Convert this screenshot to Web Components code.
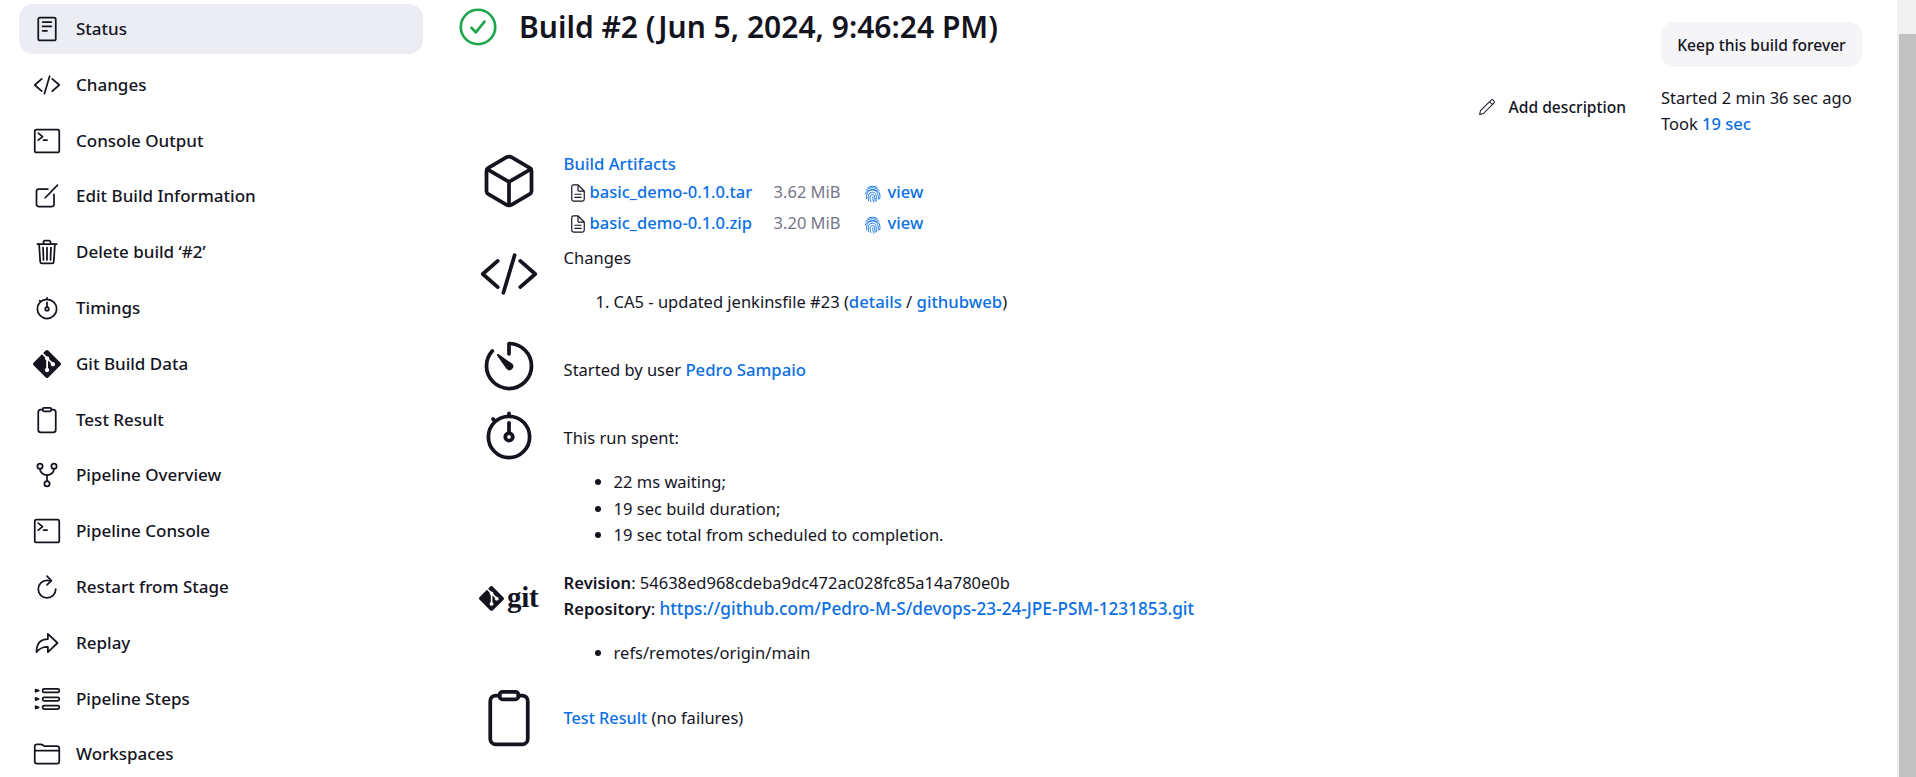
<!DOCTYPE html>
<html lang="en">
<head>
<meta charset="utf-8">
<title>Build #2</title>
<style>
  html, body { margin: 0; height: 100%; overflow: hidden; background: #fff; }
  body { font-family: "Noto Sans", "Open Sans", sans-serif; font-size: 16.5px; color: #14141f; }
</style>
</head>
<body>
<build-page></build-page>

<script>
const ICONS = {
    status: `<rect x="96" y="48" width="320" height="416" rx="32" class="s"/><path class="s" d="M176 128h160M176 208h160M176 288h80"/>`,
    code: `<path class="s" d="M160 368L32 256l128-112M352 368l128-112-128-112M304 96l-96 320"/>`,
    terminal: `<rect x="32" y="48" width="448" height="416" rx="32" class="s"/><path class="s" d="M96 112l80 64-80 64M192 240h64"/>`,
    edit: `<path class="s" d="M384 224v184a40 40 0 01-40 40H104a40 40 0 01-40-40V168a40 40 0 0140-40h167.48"/><path class="s" d="M224 288L448 56"/>`,
    trash: `<path class="s" d="M112 112l20 320c.95 18.49 14.4 32 32 32h184c17.67 0 30.87-13.51 32-32l20-320"/><path class="s" d="M80 112h352"/><path class="s" d="M192 112V72a23.93 23.93 0 0124-24h80a23.93 23.93 0 0124 24v40M256 176v224M184 176l8 224M328 176l-8 224"/>`,
    stopwatch: `<path class="s" d="M256 232v-80"/><path class="s" d="M256 88V72M132 132l-12-12"/><circle cx="256" cy="272" r="32" class="s"/><path class="s" d="M256 96c-97.05 0-176 78.95-176 176s78.95 176 176 176 176-78.95 176-176S353.05 96 256 96z"/>`,
    timer: `<path class="s" d="M112.91 128A191.85 191.85 0 0064 254c-1.18 106.35 85.65 193.8 192 194 106.2.2 192-85.83 192-192 0-104.54-83.55-189.61-187.5-192a4.36 4.36 0 00-4.5 4.37V152"/><path class="f" d="M233.38 278.63l-79-113a8.13 8.13 0 0111.32-11.32l113 79a32.5 32.5 0 01-37.25 53.26 33.21 33.21 0 01-8.07-8.32z"/>`,
    clipboard: `<path class="s" d="M336 64h32a48 48 0 0148 48v320a48 48 0 01-48 48H144a48 48 0 01-48-48V112a48 48 0 0148-48h32"/><rect x="176" y="32" width="160" height="64" rx="26" class="s"/>`,
    network: `<circle cx="128" cy="96" r="48" class="s"/><circle cx="256" cy="416" r="48" class="s"/><path class="s" d="M256 256v112"/><circle cx="384" cy="96" r="48" class="s"/><path class="s" d="M128 144c0 74.67 68.92 112 128 112M384 144c0 74.67-68.92 112-128 112"/>`,
    reload: `<path class="s" d="M320 146s24.36-12-64-12a160 160 0 10160 160"/><path class="s" d="M256 58l80 80-80 80"/>`,
    redo: `<path class="s" d="M448 256L272 88v96C103.57 184 64 304.77 64 424c48.61-62.24 91.6-96 208-96v96z"/>`,
    steps: `<rect x="176" y="72" width="304" height="64" rx="28" class="s"/><rect x="176" y="224" width="304" height="64" rx="28" class="s"/><rect x="176" y="376" width="304" height="64" rx="28" class="s"/><path class="s" d="M48 84l56 20-56 20zM48 236l56 20-56 20zM48 388l56 20-56 20z"/>`,
    folder: `<path class="s" d="M440 432H72a40 40 0 01-40-40V120a40 40 0 0140-40h75.89a40 40 0 0122.19 6.72l27.84 18.56a40 40 0 0022.19 6.72H440a40 40 0 0140 40v240a40 40 0 01-40 40zM32 192h448"/>`,
    cube: `<path class="s" d="M448 341.37V170.61A32 32 0 00432.11 143l-152-88.46a47.94 47.94 0 00-48.24 0L79.89 143A32 32 0 0064 170.61v170.76A32 32 0 0079.89 369l152 88.46a48 48 0 0048.24 0l152-88.46A32 32 0 00448 341.37z"/><path class="s" d="M69 153.99l187 110 187-110M256 463.99v-200"/>`,
    file: `<path class="s" d="M416 221.25V416a48 48 0 01-48 48H144a48 48 0 01-48-48V96a48 48 0 0148-48h98.75a32 32 0 0122.62 9.37l141.26 141.26a32 32 0 019.37 22.62z"/><path class="s" d="M256 56v120a32 32 0 0032 32h120M176 288h160M176 368h160"/>`,
    pencil: `<path class="s" d="M362 78a34 34 0 0148 0l26 26a34 34 0 010 48L166 422l-98 24 22-98zM322 118l74 74"/>`,
    check: `<circle cx="256" cy="256" r="232" class="s"/><path class="s" d="M344 184L226 328l-58-62"/>`,
    fingerprint: `<path class="s" d="M132 92c76-44 172-44 248 0M76 176c84-104 276-104 360 0M60 270c36-160 356-160 392 0 8 40 6 90 0 130M100 400c-24-170 60-240 156-240 100 0 170 70 156 250M154 448c-26-90-22-226 102-226 96 0 112 90 100 236M212 472c-26-60-44-190 44-190 70 0 54 110 72 180M262 344c0 60 10 110 30 146"/>`
};

class AppIcon extends HTMLElement {
    connectedCallback() {
        const size = this.getAttribute("size") || 28;
        const weight = this.getAttribute("weight") || 32;
        this.attachShadow({ mode: "open" }).innerHTML = `
      <style>
        :host { display: inline-flex; flex: none; width: ${size}px; height: ${size}px; color: inherit; }
        svg { width: 100%; height: 100%; display: block; }
        .s { fill: none; stroke: currentColor; stroke-width: ${weight}; stroke-linecap: round; stroke-linejoin: round; }
        .f { fill: currentColor; }
      </style>
      <svg viewBox="0 0 512 512">${ICONS[this.getAttribute("name")]}</svg>`;
    }
}
customElements.define("app-icon", AppIcon);

class GitMark extends HTMLElement {
    connectedCallback() {
        const size = this.getAttribute("size") || 28;
        this.attachShadow({ mode: "open" }).innerHTML = `
      <style>
        :host { display: inline-flex; flex: none; width: ${size}px; height: ${size}px; }
        svg { width: 100%; height: 100%; display: block; fill: #14141f; }
      </style>
      <svg viewBox="0 0 24 24"><path d="M23.546 10.93L13.067.452c-.604-.603-1.582-.603-2.188 0L8.708 2.627l2.76 2.76c.645-.215 1.379-.07 1.889.441.516.515.658 1.258.438 1.9l2.658 2.66c.645-.223 1.387-.078 1.9.435.721.72.721 1.884 0 2.604-.719.719-1.881.719-2.6 0-.539-.541-.674-1.337-.404-1.996L12.86 8.955v6.525c.176.086.342.203.488.348.713.721.713 1.883 0 2.6-.719.721-1.889.721-2.609 0-.719-.719-.719-1.879 0-2.598.182-.18.387-.316.605-.406V8.835c-.217-.091-.424-.222-.6-.401-.545-.545-.676-1.342-.396-2.009L7.636 3.7.45 10.881c-.6.605-.6 1.584 0 2.189l10.48 10.477c.604.604 1.582.604 2.186 0l10.43-10.43c.605-.603.605-1.582 0-2.187"/></svg>`;
    }
}
customElements.define("git-mark", GitMark);

class SideItem extends HTMLElement {
    connectedCallback() {
        const active = this.hasAttribute("active");
        this.attachShadow({ mode: "open" }).innerHTML = `
      <style>
        :host {
          display: flex;
          align-items: center;
          gap: 15px;
          height: 50px;
          padding-left: 14px;
          border-radius: 14px;
          font-size: 17px;
          font-weight: 500;
          background: ${active ? "#ecedf3" : "transparent"};
        }
        span { margin-top: -1px; }
      </style>
      <slot name="icon"></slot>
      <span><slot></slot></span>`;
    }
}
customElements.define("side-item", SideItem);

class SidePanel extends HTMLElement {
    connectedCallback() {
        const items = [
            ["status", "Status"], ["code", "Changes"], ["terminal", "Console Output"],
            ["edit", "Edit Build Information"], ["trash", "Delete build ‘#2’"], ["stopwatch", "Timings"],
            ["git", "Git Build Data"], ["clipboard", "Test Result"], ["network", "Pipeline Overview"],
            ["terminal", "Pipeline Console"], ["reload", "Restart from Stage"], ["redo", "Replay"],
            ["steps", "Pipeline Steps"], ["folder", "Workspaces"]
        ];
        const rows = items.map(([icon, label], i) => {
            const glyph = icon === "git"
                ? `<git-mark slot="icon" size="28"></git-mark>`
                : `<app-icon slot="icon" name="${icon}" size="28"></app-icon>`;
            return `<side-item ${i === 0 ? "active" : ""}>${glyph}${label}</side-item>`;
        }).join("");
        this.attachShadow({ mode: "open" }).innerHTML = `
      <style>
        :host {
          display: flex;
          flex-direction: column;
          gap: 5.8px;
          padding: 4px 19px 0 19px;
          box-sizing: border-box;
          width: 442px;
        }
      </style>
      ${rows}`;
    }
}
customElements.define("side-panel", SidePanel);

class SummaryRow extends HTMLElement {
    connectedCallback() {
        const height = this.getAttribute("height");
        const pad = this.getAttribute("pad") || 0;
        this.attachShadow({ mode: "open" }).innerHTML = `
      <style>
        :host {
          display: grid;
          grid-template-columns: 60px 1fr;
          column-gap: 24.6px;
          height: ${height}px;
          line-height: 26px;
        }
        .icon { height: 60px; display: flex; align-items: center; }
        .body { padding-top: ${pad}px; min-width: 0; }
      </style>
      <div class="icon"><slot name="icon"></slot></div>
      <div class="body"><slot></slot></div>`;
    }
}
customElements.define("summary-row", SummaryRow);

class ArtifactLine extends HTMLElement {
    connectedCallback() {
        const name = this.getAttribute("name");
        const size = this.getAttribute("size");
        this.attachShadow({ mode: "open" }).innerHTML = `
      <style>
        :host {
          display: grid;
          grid-template-columns: 20px 184px 91px auto;
          height: 31px;
          align-items: center;
          padding-left: 6px;
          margin-top: -1px;
          margin-bottom: 1px;
          line-height: 31px;
        }
        a { color: var(--link); font-size: 16.5px; font-weight: 500; text-decoration: none; }
        .size { color: #777788; }
        .name { display: flex; align-items: center; }
        .view { display: flex; align-items: center; gap: 6px; margin-left: -2px; }
        .view app-icon { color: var(--link); margin-top: 3px; }
        app-icon.doc { margin: 3px 0 0 -2px; }
      </style>
      <app-icon class="doc" name="file" size="20" weight="30"></app-icon>
      <span class="name"><a href="#">${name}</a></span>
      <span class="size">${size}</span>
      <span class="view"><app-icon name="fingerprint" size="19" weight="24"></app-icon><a href="#">view</a></span>`;
    }
}
customElements.define("artifact-line", ArtifactLine);

class BuildHeader extends HTMLElement {
    connectedCallback() {
        this.attachShadow({ mode: "open" }).innerHTML = `
      <style>
        :host {
          display: grid;
          grid-template-columns: 1fr 201px;
          height: 151px;
          padding: 0 35px 0 17px;
        }
        .title { display: flex; align-items: center; gap: 22px; height: 54px; }
        h1 { margin: 0; font-size: 30px; line-height: 36px; font-weight: 600; }
        .check { color: #1ea64c; }
        .side { padding-top: 22px; }
        button {
          display: block;
          width: 201px;
          height: 45px;
          border: 0;
          border-radius: 13px;
          background: #f5f5f8;
          color: #14141f;
          font: 500 15.6px "Noto Sans", "Open Sans", sans-serif;
          padding: 0;
        }
        .meta { margin-top: 18px; line-height: 26px; white-space: nowrap; }
        .meta a { color: var(--link); font-weight: 500; text-decoration: none; }
        .left { display: flex; flex-direction: column; }
        .desc {
          display: flex;
          align-items: center;
          justify-content: flex-end;
          gap: 12px;
          margin-top: 40px;
          padding-right: 35px;
          height: 26px;
          font-size: 15.6px;
          font-weight: 500;
        }
      </style>
      <div class="left">
        <div class="title">
          <app-icon class="check" name="check" size="38" weight="36"></app-icon>
          <h1>Build #2 (Jun 5, 2024, 9:46:24 PM)</h1>
        </div>
        <div class="desc"><app-icon name="pencil" size="20" weight="26"></app-icon><span>Add description</span></div>
      </div>
      <div class="side">
        <button>Keep this build forever</button>
        <div class="meta">Started 2 min 36 sec ago<br>Took <a href="#">19 sec</a></div>
      </div>`;
    }
}
customElements.define("build-header", BuildHeader);

class BuildSummary extends HTMLElement {
    connectedCallback() {
        this.attachShadow({ mode: "open" }).innerHTML = `
      <style>
        :host { display: block; padding-left: 37px; }
        a { color: var(--link); font-size: 16.7px; font-weight: 500; text-decoration: none; }
        a.url { font-size: 17.2px; }
        a.test { font-size: 16.2px; }
        ul, ol { margin: 18px 0 0; padding-left: 50px; line-height: 26.5px; }
        b { font-size: 16.6px; font-weight: 600; }
        .git { display: flex; align-items: center; gap: 3px; margin-top: -1px; }
        .git span { font: 700 29px/30px "Liberation Serif", serif; margin-top: -4px; letter-spacing: -.3px; }
      </style>
      <summary-row height="93">
        <app-icon slot="icon" name="cube" size="60"></app-icon>
        <a href="#">Build Artifacts</a>
        <artifact-line name="basic_demo-0.1.0.tar" size="3.62 MiB"></artifact-line>
        <artifact-line name="basic_demo-0.1.0.zip" size="3.20 MiB"></artifact-line>
      </summary-row>
      <summary-row height="92" pad="1">
        <app-icon slot="icon" name="code" size="60"></app-icon>
        Changes
        <ol><li>CA5 - updated jenkinsfile #23 (<a href="#">details</a> / <a href="#">githubweb</a>)</li></ol>
      </summary-row>
      <summary-row height="69" pad="21">
        <app-icon slot="icon" name="timer" size="60"></app-icon>
        Started by user <a href="#">Pedro Sampaio</a>
      </summary-row>
      <summary-row height="164" pad="20">
        <app-icon slot="icon" name="stopwatch" size="60"></app-icon>
        This run spent:
        <ul><li>22 ms waiting;</li><li>19 sec build duration;</li><li>19 sec total from scheduled to completion.</li></ul>
      </summary-row>
      <summary-row height="119" pad="1">
        <div slot="icon" class="git"><git-mark size="25"></git-mark><span>git</span></div>
        <b>Revision</b>: 54638ed968cdeba9dc472ac028fc85a14a780e0b<br>
        <b>Repository</b>: <a class="url" href="#">https://github.com/Pedro-M-S/devops-23-24-JPE-PSM-1231853.git</a>
        <ul><li>refs/remotes/origin/main</li></ul>
      </summary-row>
      <summary-row height="60" pad="17">
        <app-icon slot="icon" name="clipboard" size="60"></app-icon>
        <a class="test" href="#">Test Result</a> (no failures)
      </summary-row>`;
    }
}
customElements.define("build-summary", BuildSummary);

class FakeScrollbar extends HTMLElement {
    connectedCallback() {
        this.attachShadow({ mode: "open" }).innerHTML = `
      <style>
        :host {
          display: block;
          box-sizing: border-box;
          width: 19px;
          height: 100%;
          padding: 34px 0 0 2px;
          background: #f1f1f1;
        }
        div { height: 100%; background: #c1c1c1; }
      </style>
      <div></div>`;
    }
}
customElements.define("fake-scrollbar", FakeScrollbar);

class BuildPage extends HTMLElement {
    connectedCallback() {
        this.attachShadow({ mode: "open" }).innerHTML = `
      <style>
        :host {
          display: grid;
          grid-template-columns: 442px 1fr 19px;
          height: 777px;
          overflow: hidden;
          --link: #0b6fe4;
        }
        main { min-width: 0; }
      </style>
      <side-panel></side-panel>
      <main>
        <build-header></build-header>
        <build-summary></build-summary>
      </main>
      <fake-scrollbar></fake-scrollbar>`;
    }
}
customElements.define("build-page", BuildPage);
</script>
</body>
</html>
